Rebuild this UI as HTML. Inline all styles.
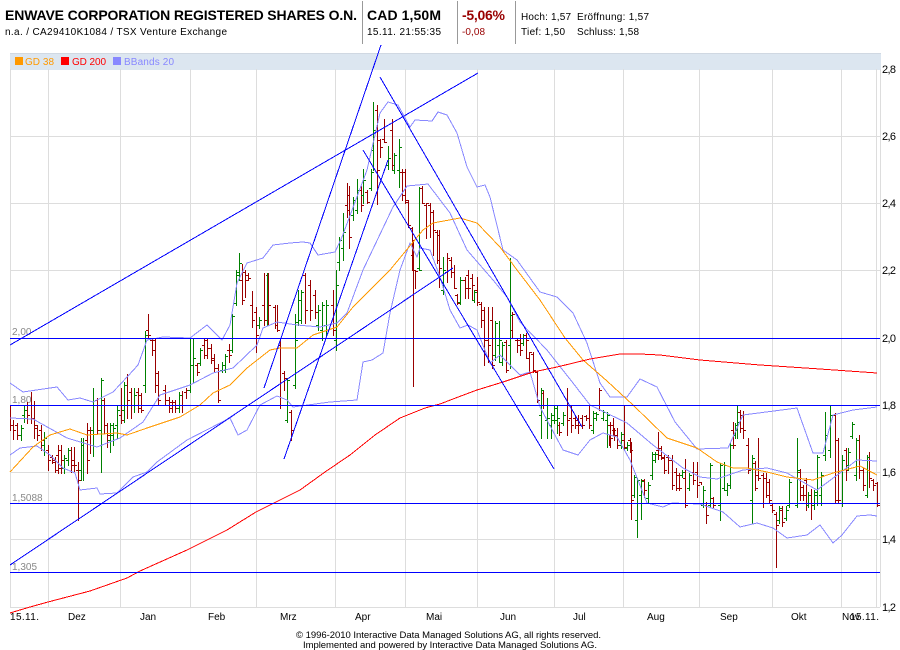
<!DOCTYPE html>
<html lang="de">
<head>
<meta charset="utf-8">
<title>Enwave Corporation Chart</title>
<style>
html,body{margin:0;padding:0;background:#fff;width:900px;height:650px;overflow:hidden}
svg{display:block}
text{font-family:"Liberation Sans",Arial,sans-serif;fill:#000;font-size:10px}
.b{font-weight:bold;font-size:14px}
.ax{font-size:11px}
.lv{font-size:10px;fill:#888}
.ft{font-size:9.5px}
</style>
</head>
<body>
<svg width="900" height="650" viewBox="0 0 900 650" xmlns="http://www.w3.org/2000/svg">
<!-- header -->
<text class="b" x="5" y="20" textLength="352" lengthAdjust="spacing">ENWAVE CORPORATION REGISTERED SHARES O.N.</text>
<text x="5" y="35" textLength="222" lengthAdjust="spacing">n.a. / CA29410K1084 / TSX Venture Exchange</text>
<text class="b" x="367" y="20" textLength="74" lengthAdjust="spacing">CAD 1,50M</text>
<text x="367" y="35" textLength="74" lengthAdjust="spacing">15.11. 21:55:35</text>
<text class="b" x="462" y="20" textLength="43" lengthAdjust="spacing" style="fill:#990000">-5,06%</text>
<text x="462" y="35" textLength="23" lengthAdjust="spacing" style="fill:#990000">-0,08</text>
<text x="521" y="20" textLength="50" lengthAdjust="spacing">Hoch: 1,57</text>
<text x="577" y="20" textLength="72" lengthAdjust="spacing">Eröffnung: 1,57</text>
<text x="521" y="35" textLength="44" lengthAdjust="spacing">Tief: 1,50</text>
<text x="577" y="35" textLength="62" lengthAdjust="spacing">Schluss: 1,58</text>
<path d="M362.5 1V44M457.5 1V44M515.5 1V44" stroke="#999" fill="none"/>
<!-- legend -->
<rect x="10" y="53" width="871" height="17" fill="#dce6f0"/>
<path d="M10 53.5H881" stroke="#d0d8e2" fill="none"/>
<rect x="15" y="57" width="8" height="8" fill="#ff9900"/>
<text x="25" y="65" textLength="29" lengthAdjust="spacing" style="fill:#ff9900">GD 38</text>
<rect x="61" y="57" width="8" height="8" fill="#ff0000"/>
<text x="72" y="65" textLength="34" lengthAdjust="spacing" style="fill:#ff0000">GD 200</text>
<rect x="113" y="57" width="8" height="8" fill="#8888ff"/>
<text x="124" y="65" textLength="50" lengthAdjust="spacing" style="fill:#8888ff">BBands 20</text>
<!-- grid -->
<path d="M10.5 69V607M48.5 69V607M120.5 69V607M190.5 69V607M256.5 69V607M335.5 69V607M405.5 69V607M477.5 69V607M554.5 69V607M623.5 69V607M699.5 69V607M772.5 69V607M841.5 69V607M876.5 69V607M880.5 69V607M10 136.5H880M10 203.5H880M10 270.5H880M10 472.5H880M10 539.5H880M10 607.5H880" stroke="#ddd" fill="none"/>
<!-- level labels -->
<text class="lv" x="12" y="335">2,00</text>
<text class="lv" x="12" y="403">1,80</text>
<text class="lv" x="12" y="501">1,5088</text>
<text class="lv" x="12" y="570">1,305</text>
<!-- bars -->
<g transform="translate(.5,.5)" fill="none" shape-rendering="crispEdges" stroke-linecap="square">
<path stroke="#990000" d="M10 405V430M13 420V439M11 425h2M13 430h2M17 423V439M15 425h2M17 435h2M27 402V423M25 410h2M27 415h2M31 392V423M29 405h2M31 418h2M34 401V438M32 405h2M34 425h2M37 425V440M35 428h2M37 435h2M41 425V450M39 430h2M41 440h2M48 445V470M46 450h2M48 460h2M52 455V463M50 457h2M52 462h2M55 457V472M53 460h2M55 470h2M58 445V473M56 455h2M58 468h2M61 445V473M59 450h2M61 460h2M71 447V472M69 450h2M71 465h2M74 447V471M72 460h2M74 465h2M78 462V520M76 470h2M78 480h2M87 423V473M85 440h2M87 460h2M90 427V453M88 430h2M90 445h2M97 398V433M95 400h2M97 430h2M104 398V433M102 400h2M104 425h2M107 423V447M105 425h2M107 435h2M121 388V423M119 415h2M121 420h2M127 374V418M125 385h2M127 400h2M131 388V418M129 392h2M131 405h2M138 388V412M136 392h2M138 408h2M141 393V412M139 395h2M141 410h2M148 314V338M146 330h2M148 335h2M152 338V355M150 340h2M152 350h2M155 338V392M153 340h2M155 385h2M158 371V405M156 373h2M158 400h2M165 385V405M163 390h2M165 400h2M169 397V412M167 400h2M169 408h2M172 400V412M170 402h2M172 405h2M175 400V412M173 402h2M175 408h2M182 391V412M180 395h2M182 405h2M186 388V398M184 392h2M186 390h2M197 363V375M195 365h2M197 372h2M204 338V358M202 345h2M204 355h2M207 338V358M205 340h2M207 348h2M211 344V363M209 348h2M211 360h2M214 354V371M212 358h2M214 368h2M218 364V402M216 368h2M218 400h2M229 344V362M227 350h2M229 355h2M242 264V304M240 280h2M242 300h2M245 270V297M243 272h2M245 280h2M248 273V280M246 275h2M248 278h2M252 291V327M250 305h2M252 320h2M256 307V352M254 312h2M256 335h2M264 273V325M262 305h2M264 320h2M268 273V325M266 275h2M268 305h2M275 305V328M273 307h2M275 325h2M277 305V331M275 325h2M277 330h2M280 338V408M278 345h2M280 405h2M284 371V390M282 373h2M284 378h2M291 410V440M289 412h2M291 430h2M305 273V323M303 275h2M305 310h2M310 280V320M308 285h2M310 310h2M315 290V318M313 295h2M315 312h2M333 290V335M331 305h2M333 330h2M347 183V217M345 205h2M347 210h2M349 186V248M347 195h2M349 237h2M361 186V211M359 190h2M361 205h2M367 190V203M365 192h2M367 202h2M377 105V204M375 110h2M377 170h2M380 139V157M378 140h2M380 147h2M384 119V142M382 139h2M384 142h2M392 119V169M390 130h2M392 165h2M402 169V200M400 172h2M402 195h2M405 169V203M403 172h2M405 200h2M408 200V227M406 202h2M408 225h2M412 227V270M410 228h2M412 240h2M413 242V386M411 255h2M413 270h2M415 270V288M415 271h2M422 186V203M420 188h2M422 203h2M426 203V238M424 205h2M426 203h2M430 203V237M428 205h2M430 212h2M433 210V255M431 212h2M433 230h2M437 230V263M435 232h2M437 260h2M439 230V287M437 235h2M439 268h2M447 253V282M445 272h2M447 258h2M451 257V277M449 260h2M451 272h2M454 265V288M452 272h2M454 288h2M457 294V304M455 295h2M457 303h2M465 277V298M463 280h2M465 288h2M468 270V298M466 275h2M468 288h2M472 274V300M470 278h2M472 285h2M477 277V305M475 290h2M477 302h2M481 302V327M479 304h2M481 320h2M484 307V365M482 310h2M484 340h2M488 307V362M486 340h2M488 345h2M492 307V368M490 320h2M492 365h2M506 340V372M504 342h2M506 370h2M512 312V338M510 330h2M512 314h2M517 338V352M515 340h2M517 345h2M520 334V355M518 340h2M520 350h2M526 333V358M524 335h2M526 340h2M529 352V373M527 358h2M529 352h2M533 352V372M531 354h2M533 370h2M537 371V402M535 372h2M537 400h2M543 391V408M541 393h2M543 405h2M559 422V435M557 425h2M559 432h2M567 388V435M565 405h2M567 420h2M571 405V432M569 418h2M571 425h2M575 415V428M573 418h2M575 425h2M578 415V433M576 420h2M578 425h2M582 415V428M580 418h2M582 425h2M586 415V420M584 416h2M586 418h2M589 405V428M587 418h2M589 425h2M599 388V410M597 405h2M599 390h2M610 422V447M608 425h2M610 438h2M614 428V440M612 430h2M614 435h2M617 432V447M615 435h2M617 445h2M624 405V450M622 440h2M624 447h2M630 438V452M628 440h2M630 450h2M609 435V445M613 418V435M611 425h2M613 430h2M617 428V448M631 442V519M629 445h2M631 500h2M644 479V497M642 480h2M644 490h2M658 432V459M656 450h2M658 455h2M661 446V459M659 448h2M661 457h2M664 455V473M662 458h2M664 470h2M668 455V473M666 457h2M668 460h2M672 455V489M670 460h2M672 485h2M676 468V490M674 472h2M676 488h2M679 473V490M677 475h2M679 488h2M685 459V507M683 478h2M685 505h2M693 462V484M691 472h2M693 480h2M697 462V497M695 472h2M697 485h2M701 482V484M699 482h2M706 502V523M704 505h2M706 515h2M713 497V507M711 498h2M713 505h2M733 422V448M731 430h2M733 445h2M740 410V432M738 412h2M740 428h2M743 411V438M741 415h2M743 430h2M748 438V473M746 445h2M748 470h2M755 461V490M753 463h2M755 488h2M758 438V480M756 475h2M758 478h2M763 473V507M761 475h2M763 503h2M766 473V497M764 478h2M766 495h2M769 479V503M767 482h2M769 500h2M772 503V512M770 505h2M772 510h2M776 512V567M774 514h2M776 525h2M782 506V526M780 510h2M782 522h2M800 469V500M798 472h2M800 495h2M803 485V500M801 487h2M803 495h2M806 478V510M804 480h2M806 505h2M811 489V519M809 495h2M811 505h2M835 413V503M833 415h2M835 500h2M838 438V503M836 440h2M838 500h2M846 448V480M844 450h2M846 470h2M859 435V478M857 440h2M859 470h2M863 468V490M861 470h2M863 485h2M869 452V487M867 470h2M869 478h2M873 479V490M871 480h2M873 485h2M877 482V506M875 483h2M877 505h2"/>
<path stroke="#008000" d="M21 425V440M19 435h2M21 428h2M24 405V422M22 415h2M24 410h2M44 432V455M42 445h2M44 438h2M64 455V473M62 468h2M64 458h2M68 448V465M66 460h2M68 450h2M81 438V480M79 470h2M81 445h2M83 438V480M93 388V456M91 430h2M93 405h2M101 378V472M99 430h2M101 380h2M110 423V452M108 440h2M110 425h2M113 423V445M111 435h2M113 428h2M117 405V438M115 425h2M117 410h2M124 382V422M122 410h2M124 385h2M134 388V412M132 405h2M134 395h2M145 331V392M143 385h2M145 335h2M179 392V412M177 408h2M179 395h2M190 338V392M188 390h2M190 365h2M193 338V382M191 365h2M193 358h2M200 348V365M198 363h2M200 350h2M222 362V372M220 370h2M222 365h2M225 354V372M223 370h2M225 356h2M232 314V352M230 350h2M232 316h2M236 270V305M234 303h2M236 272h2M239 253V280M237 275h2M239 263h2M259 317V328M257 325h2M259 320h2M267 273V325M287 378V422M285 420h2M287 380h2M295 314V388M293 385h2M295 340h2M298 290V325M296 322h2M298 300h2M301 290V323M299 320h2M301 292h2M318 305V330M316 325h2M318 310h2M322 302V340M320 330h2M322 305h2M326 300V335M324 325h2M326 305h2M336 270V350M334 340h2M336 285h2M339 237V270M337 262h2M339 240h2M343 213V260M341 248h2M343 232h2M353 197V220M351 215h2M353 200h2M357 179V213M355 210h2M357 190h2M363 169V203M361 195h2M363 180h2M371 169V190M369 188h2M371 172h2M373 102V170M371 150h2M373 130h2M388 146V169M386 165h2M388 158h2M394 153V173M392 170h2M394 155h2M399 139V187M397 170h2M399 147h2M419 187V270M417 268h2M419 270h2M443 257V294M441 290h2M443 270h2M460 277V304M458 302h2M460 280h2M474 290V302M472 300h2M474 292h2M495 321V360M493 355h2M495 323h2M499 321V362M497 345h2M499 340h2M502 342V365M500 362h2M502 345h2M510 258V368M508 345h2M510 315h2M523 334V345M521 343h2M523 338h2M541 388V438M539 415h2M541 390h2M547 398V438M545 420h2M547 418h2M551 413V438M549 425h2M551 415h2M554 405V423M552 420h2M554 408h2M557 405V433M555 420h2M557 418h2M563 412V425M561 423h2M563 415h2M593 411V433M591 430h2M593 413h2M596 412V420M594 418h2M596 414h2M603 410V420M601 418h2M603 412h2M607 412V447M605 420h2M607 415h2M621 432V448M619 445h2M621 434h2M627 442V450M625 448h2M627 445h2M634 475V497M632 495h2M634 477h2M637 478V537M635 520h2M637 480h2M641 479V519M639 495h2M641 481h2M648 482V503M646 498h2M648 485h2M652 452V479M650 475h2M652 454h2M655 452V462M653 460h2M655 454h2M682 470V477M680 475h2M682 472h2M689 473V490M687 488h2M689 475h2M703 486V507M701 505h2M703 490h2M710 463V507M708 505h2M710 465h2M720 463V520M718 505h2M720 465h2M724 462V490M722 488h2M724 465h2M727 483V495M725 490h2M727 485h2M730 443V488M728 485h2M730 445h2M735 423V438M733 435h2M735 425h2M737 406V438M735 430h2M737 422h2M752 455V523M750 500h2M752 458h2M779 506V523M777 520h2M779 508h2M786 506V520M784 518h2M786 510h2M789 479V507M787 505h2M789 482h2M797 438V507M795 505h2M797 470h2M808 492V507M806 505h2M808 495h2M814 490V509M812 505h2M814 492h2M817 455V505M815 495h2M817 457h2M821 472V505M819 495h2M821 475h2M825 412V460M823 455h2M825 435h2M830 405V457M828 450h2M830 415h2M842 455V506M840 503h2M842 460h2M848 448V470M846 465h2M848 452h2M852 422V438M850 436h2M852 424h2M856 438V480M854 475h2M856 440h2M867 455V497M865 495h2M867 457h2"/>
</g>
<!-- curves -->
<g fill="none" stroke-width="1" stroke-linejoin="round" shape-rendering="crispEdges">
<polyline stroke="#8888ff" points="10,383 23,392 50,388 57,387 68,400 80,398 93,402 113,392 128,376 138,365 147,340 163,337 190,338 207,325 222,340 230,325 237,283 247,263 263,258 273,245 290,243 303,242 310,243 318,255 335,252 342,237 367,170 380,113 388,102 398,105 410,127 415,120 432,121 438,112 447,115 457,133 467,167 477,187 485,185 490,197 503,250 517,260 540,292 557,297 573,313 587,343 600,383 610,397 627,397 640,379 657,387 675,422 697,449 728,448 743,415 797,408 813,453 823,453 833,415 853,410 877,407"/>
<polyline stroke="#8888ff" points="10,418 33,419 67,438 97,447 120,438 143,422 160,395 190,385 213,373 233,368 257,345 263,328 277,322 297,325 320,327 337,323 347,313 363,270 393,207 407,186 428,184 450,213 467,250 493,280 507,297 520,322 547,350 573,383 590,405 627,423 653,445 683,468 700,477 717,479 743,470 767,468 787,473 817,490 840,473 857,460 877,461"/>
<polyline stroke="#8888ff" points="10,455 20,448 37,446 50,455 63,468 75,473 80,490 97,488 100,494 117,493 133,477 147,472 157,462 187,440 230,418 238,435 247,430 260,405 277,396 287,400 293,407 330,402 357,400 363,362 372,360 383,353 390,313 400,270 410,243 417,257 420,248 430,250 440,277 450,310 460,328 468,325 477,330 490,363 500,355 520,375 530,372 540,407 563,450 578,455 590,440 603,433 617,437 630,460 647,503 663,507 672,503 700,504 723,512 740,527 757,523 773,528 787,538 807,535 820,525 833,543 842,535 857,516 870,515 877,516"/>
<polyline stroke="#ff9900" points="10,472 33,447 50,435 70,429 87,435 117,433 127,435 147,428 180,417 200,405 213,393 230,385 247,368 270,350 280,348 297,348 313,335 337,327 353,307 390,270 423,230 433,223 460,218 477,223 500,247 517,270 540,300 565,338 583,360 607,381 633,405 667,438 697,448 717,462 733,468 747,468 767,472 787,477 813,480 833,473 860,466 877,475"/>
<polyline stroke="#ff0000" points="10,613 30,607 48,602 90,591 127,578 140,571 187,550 227,530 256,512 272,504 300,490 325,472 350,455 375,435 400,418 425,408 440,404 453,399 477,390 503,382 533,372 557,367 590,359 620,354 640,354 660,355 700,360 760,365 820,369 877,373"/>
</g>
<!-- trend & level lines -->
<g stroke="#0000ff" fill="none" shape-rendering="crispEdges">
<path d="M10 338.5H880M10 405.5H880M10 503.5H880M10 572.5H880" stroke-width="1"/>
<path d="M10 345L478 73M10 565L453 268M264 388L381 45M284 459L388 160M363 150L554 469M380 77L582 427" stroke-width="1"/>
</g>
<!-- axis labels -->
<text class="ax" x="882" y="73" textLength="14" lengthAdjust="spacing">2,8</text>
<text class="ax" x="882" y="140" textLength="14" lengthAdjust="spacing">2,6</text>
<text class="ax" x="882" y="207" textLength="14" lengthAdjust="spacing">2,4</text>
<text class="ax" x="882" y="274" textLength="14" lengthAdjust="spacing">2,2</text>
<text class="ax" x="882" y="342" textLength="14" lengthAdjust="spacing">2,0</text>
<text class="ax" x="882" y="409" textLength="14" lengthAdjust="spacing">1,8</text>
<text class="ax" x="882" y="476" textLength="14" lengthAdjust="spacing">1,6</text>
<text class="ax" x="882" y="543" textLength="14" lengthAdjust="spacing">1,4</text>
<text class="ax" x="882" y="611" textLength="14" lengthAdjust="spacing">1,2</text>
<text x="10" y="620" textLength="29" lengthAdjust="spacing">15.11.</text>
<text x="68" y="620">Dez</text>
<text x="140" y="620">Jan</text>
<text x="208" y="620">Feb</text>
<text x="280" y="620">Mrz</text>
<text x="355" y="620">Apr</text>
<text x="426" y="620">Mai</text>
<text x="500" y="620">Jun</text>
<text x="573" y="620">Jul</text>
<text x="647" y="620">Aug</text>
<text x="720" y="620">Sep</text>
<text x="791" y="620">Okt</text>
<text x="842" y="620">Nov</text>
<text x="850" y="620" textLength="29" lengthAdjust="spacing">15.11.</text>
<!-- footer -->
<text class="ft" x="296" y="638" textLength="305" lengthAdjust="spacing">© 1996-2010 Interactive Data Managed Solutions AG, all rights reserved.</text>
<text class="ft" x="303" y="648" textLength="294" lengthAdjust="spacing">Implemented and powered by Interactive Data Managed Solutions AG.</text>
</svg>
</body>
</html>
